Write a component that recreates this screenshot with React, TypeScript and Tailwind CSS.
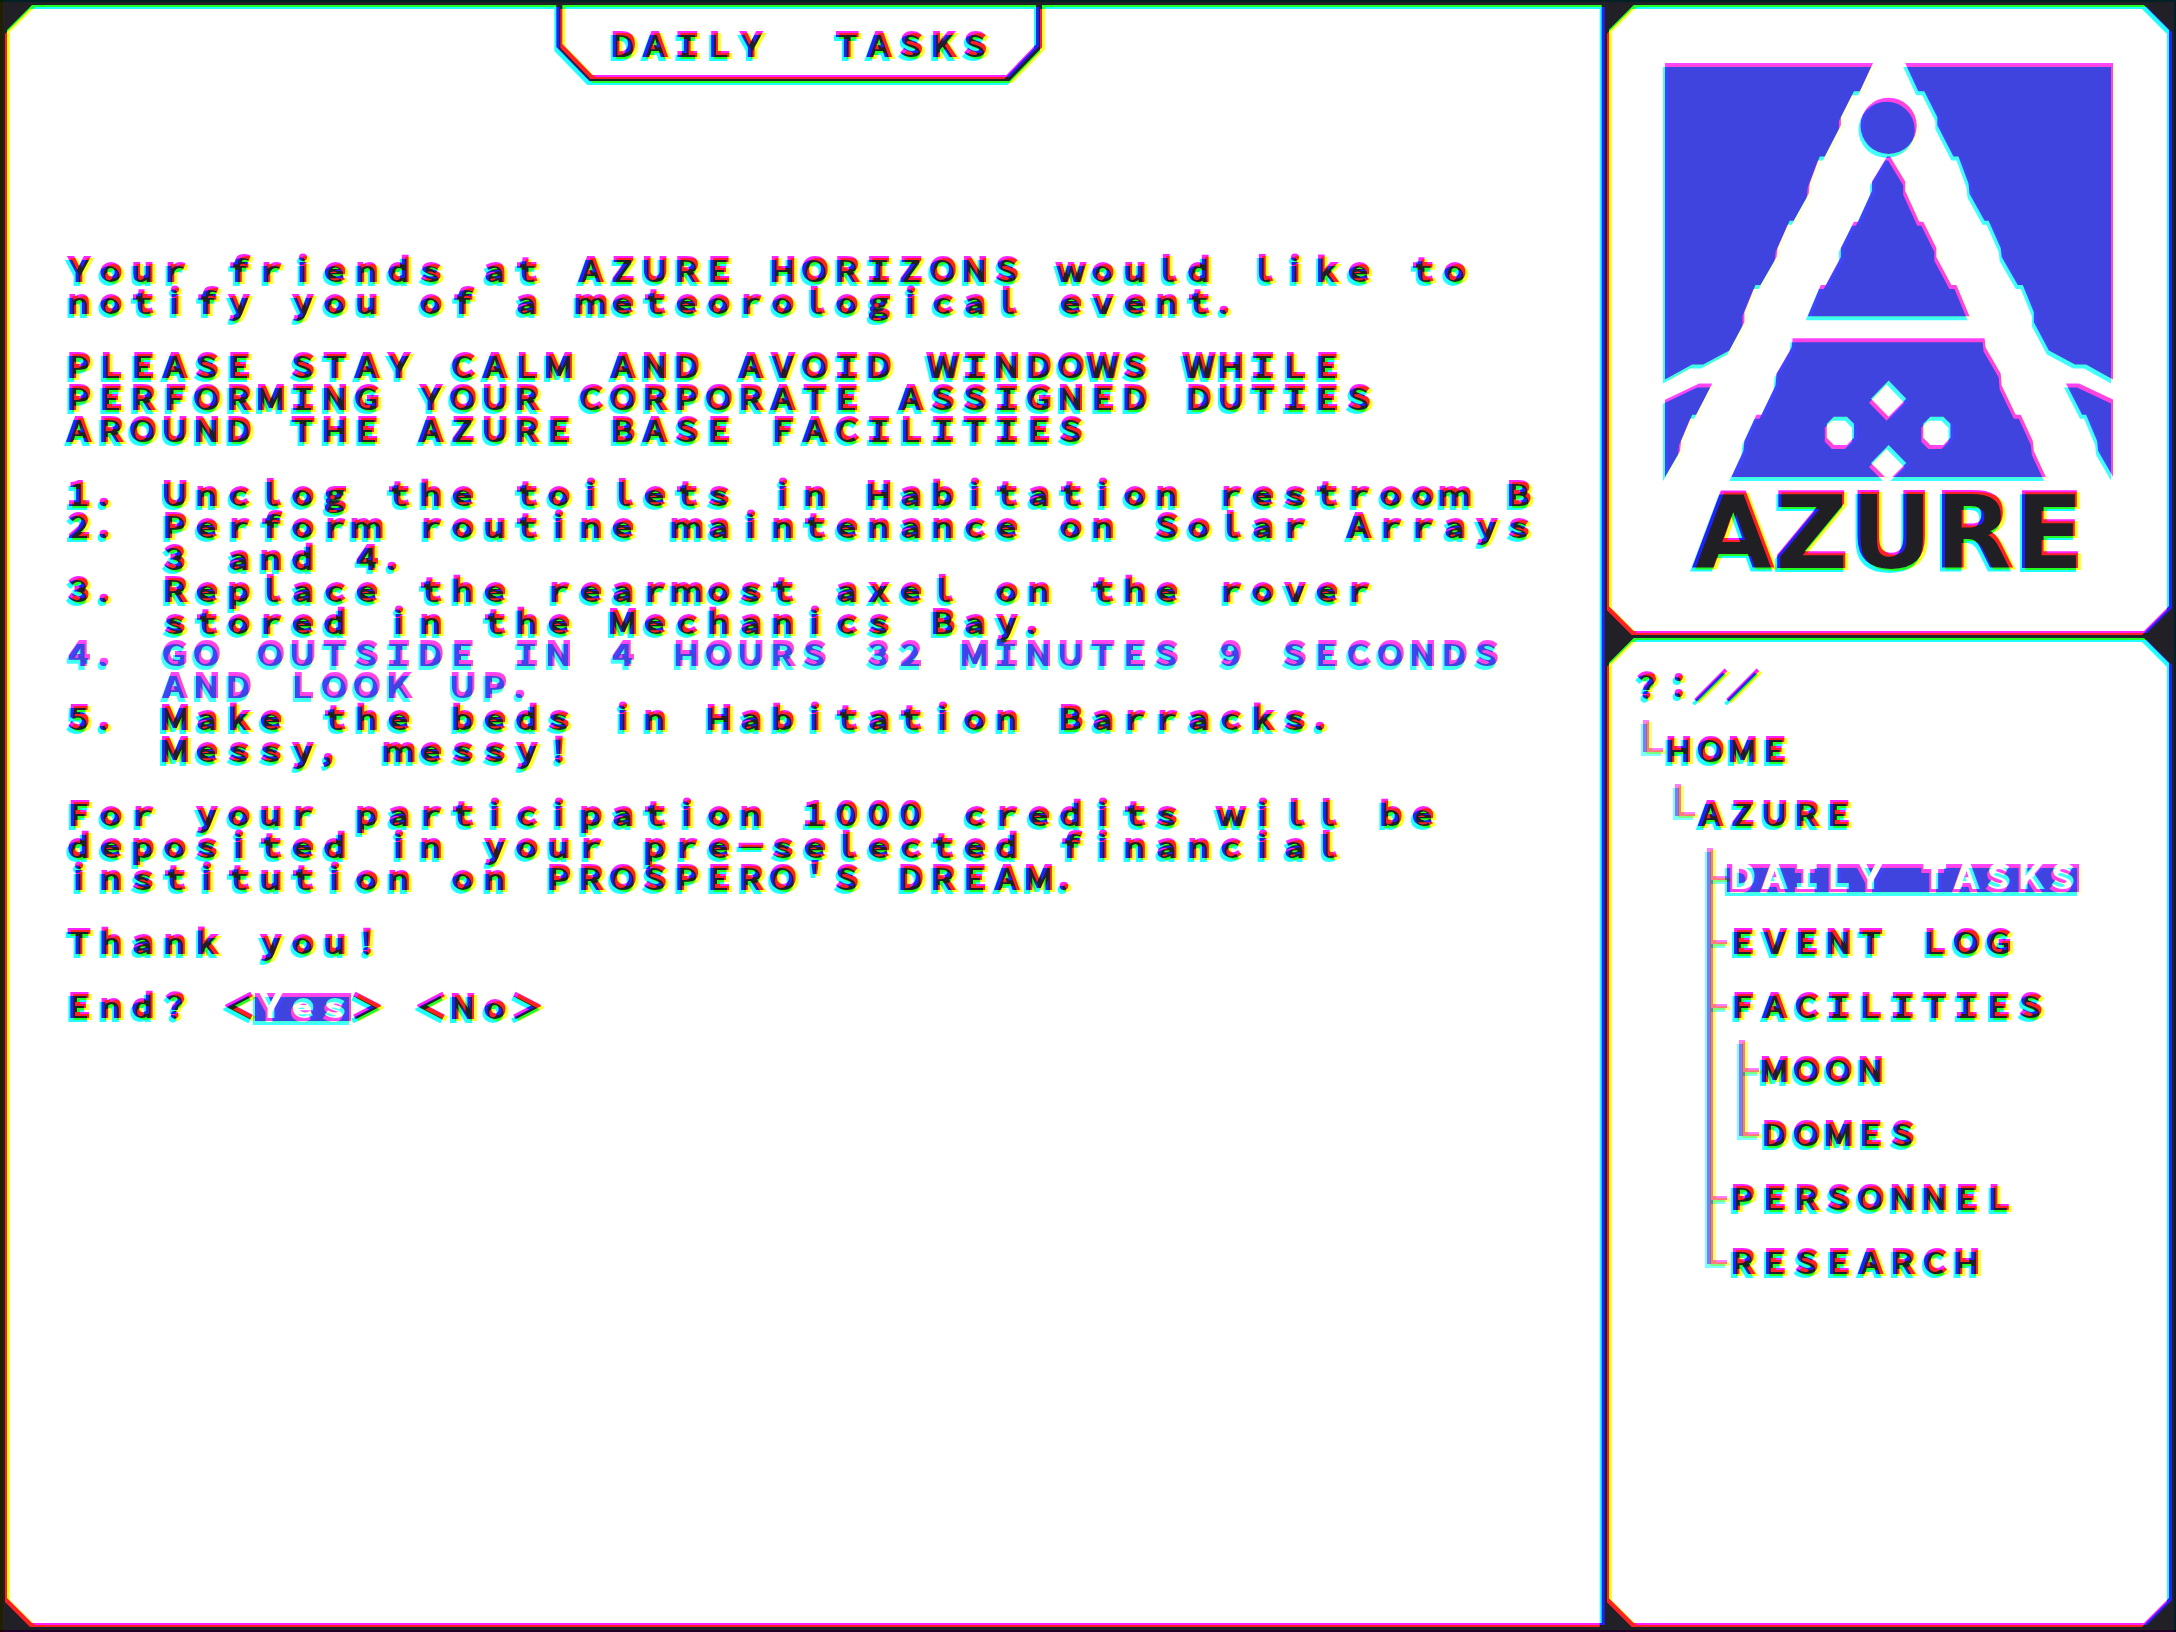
import type { ReactNode } from "react";

type Entry = { label: string; active?: boolean; children?: Entry[] };

const tree: Entry[] = [
  {
    label: "HOME",
    children: [
      {
        label: "AZURE",
        children: [
          { label: "DAILY TASKS", active: true },
          { label: "EVENT LOG" },
          { label: "FACILITIES", children: [{ label: "MOON" }, { label: "DOMES" }] },
          { label: "PERSONNEL" },
          { label: "RESEARCH" },
        ],
      },
    ],
  },
];

const tasks: { text: string; alert?: boolean }[] = [
  { text: "Unclog the toilets in Habitation restroom B" },
  { text: "Perform routine maintenance on Solar Arrays 3 and 4." },
  { text: "Replace the rearmost axel on the rover stored in the Mechanics Bay." },
  { text: "GO OUTSIDE IN 4 HOURS 32 MINUTES 9 SECONDS AND LOOK UP.", alert: true },
  { text: "Make the beds in Habitation Barracks. Messy, messy!" },
];

/* Splits the colour channels like a badly converged CRT. */
function ConvergenceFilter() {
  return (
    <svg width="0" height="0" className="absolute" aria-hidden="true">
      <filter id="convergence" x="0" y="0" width="100%" height="100%" colorInterpolationFilters="sRGB">
        <feColorMatrix in="SourceGraphic" values="1 0 0 0 0  0 0 0 0 0  0 0 0 0 0  0 0 0 1 0" />
        <feOffset dx="-2" dy="2" result="r" />
        <feColorMatrix in="SourceGraphic" values="0 0 0 0 0  0 1 0 0 0  0 0 0 0 0  0 0 0 1 0" />
        <feOffset dx="0" dy="-2" result="g" />
        <feColorMatrix in="SourceGraphic" values="0 0 0 0 0  0 0 0 0 0  0 0 1 0 0  0 0 0 1 0" />
        <feOffset dx="3" dy="0" result="b" />
        <feBlend in="r" in2="g" mode="screen" result="rg" />
        <feBlend in="rg" in2="b" mode="screen" />
      </filter>
    </svg>
  );
}

function Logo() {
  return (
    <svg viewBox="0 0 446 412" className="w-4/5" aria-hidden="true">
      <g fill="#4044de">
        <path d="M0 0H207L194 28H188L175 54V62L159 93H154L144 120 143 130 128 157H124L112 184 111 193 95 221H90L79 248V258L64 286 38 300H27L0 315Z" />
        <path d="M446 0H239L252 28H258L271 54V62L287 93H292L302 120 303 130 318 157H322L334 184 335 193 351 221H356L367 248V258L382 286 408 300H419L446 315Z" />
        <path d="M0 335 34 319H47L31 350H27L16 376 15 386 0 412Z" />
        <path d="M446 335 412 319H399L415 350H419L430 376 431 386 446 412Z" />
        <path d="M221 93 206 118V127L192 158H188L175 184V193L160 221H155L142 252H303L290 221H285L270 193V184L257 158H253L239 127V118L224 93Z" />
        <path d="M127 274H318L319 283 334 309 335 321 349 350H354L366 376 367 386 379 412H66L78 386 79 376 91 350H96L110 321 111 309 126 283Z" />
        <circle cx="222.500" cy="62.500" r="28" />
      </g>
      <g fill="#fff">
        <path d="M222.500 316 240 334 222.500 352 205 334Z" />
        <path d="M222.500 380 240 398 226 412H219L205 398Z" />
        <path d="M168 352H181L188 359V373L181 380H168L161 373V359Z" />
        <path d="M264 352H277L284 359V373L277 380H264L257 373V359Z" />
      </g>
    </svg>
  );
}

function Selected({ children }: { children: ReactNode }) {
  return <span className="inline-block bg-[#4044de] pb-2 leading-5 text-white">{children}</span>;
}

function Branch({ entries }: { entries: Entry[] }) {
  return (
    <ul>
      {entries.map((entry, i) => (
        <li key={entry.label} className="flex">
          <span className="flex w-8 flex-col pl-3" aria-hidden="true">
            <span className="h-8 border-b-4 border-l-6 border-[#7c7c7c]" />
            {i < entries.length - 1 && <span className="flex-1 border-l-6 border-[#7c7c7c]" />}
          </span>
          <div>
            <button
              type="button"
              className={
                entry.active
                  ? "flex h-16 items-center pb-1 whitespace-nowrap"
                  : "flex h-16 items-center pb-2.5 whitespace-nowrap"
              }
            >
              {entry.active ? <Selected>{entry.label}</Selected> : entry.label}
            </button>
            {entry.children && <Branch entries={entry.children} />}
          </div>
        </li>
      ))}
    </ul>
  );
}

export default function App() {
  return (
    <>
      <ConvergenceFilter />
      <div className="grid min-h-screen grid-cols-[74fr_26fr] gap-[7px] bg-[#202026] p-[7px] font-['Noto_Sans_CJK_JP',monospace] text-[32px] leading-8 font-bold text-[#202024] [filter:url(#convergence)] [font-variant-east-asian:full-width] [font-variant-ligatures:none] [-webkit-text-stroke:2px_currentColor]">
        <main className="bg-white [clip-path:polygon(25px_0,100%_0,100%_100%,25px_100%,0_calc(100%-25px),0_25px)]">
          <header className="pr-2.5">
            <div className="mx-auto h-[76px] w-[486px] bg-[#202026] px-1.5 pb-1.5 [clip-path:polygon(0_0,100%_0,100%_42px,calc(100%-33px)_100%,33px_100%,0_42px)]">
              <h1 className="flex h-full items-center justify-center bg-white pt-1 whitespace-pre [clip-path:polygon(0_0,100%_0,100%_39px,calc(100%-30px)_100%,30px_100%,0_39px)]">
                DAILY  TASKS
              </h1>
            </div>
          </header>
          <div className="flex flex-col gap-8 px-14 pt-[170px]">
            <p>Your friends at AZURE HORIZONS would like to notify you of a meteorological event.</p>
            <p>
              PLEASE STAY CALM AND AVOID WINDOWS WHILE PERFORMING YOUR CORPORATE ASSIGNED DUTIES AROUND THE AZURE BASE
              FACILITIES
            </p>
            <ol>
              {tasks.map((task, i) => (
                <li key={task.text} className={task.alert ? "flex text-[#4044de]" : "flex"}>
                  <span className="w-24 shrink-0">{i + 1}.</span>
                  <span>{task.text}</span>
                </li>
              ))}
            </ol>
            <p>
              For your participation 1000 credits will be deposited in your pre-selected financial institution on
              PROSPERO'S DREAM.
            </p>
            <p>Thank you!</p>
            <div className="flex">
              <span className="mr-8">End?</span>
              <span>&lt;</span>
              <button type="button">
                <Selected>Yes</Selected>
              </button>
              <span className="mr-8">&gt;</span>
              <span>&lt;</span>
              <button type="button">No</button>
              <span>&gt;</span>
            </div>
          </div>
        </main>
        <aside className="flex flex-col gap-[7px]">
          <section className="flex flex-col items-center bg-white pt-[58px] pb-[46px] [clip-path:polygon(25px_0,calc(100%-25px)_0,100%_25px,100%_calc(100%-25px),calc(100%-25px)_100%,25px_100%,0_calc(100%-25px),0_25px)]">
            <Logo />
            <div className="font-['DejaVu_Sans',sans-serif] text-[104px] leading-[108px] [font-variant-east-asian:normal]">
              AZURE
            </div>
          </section>
          <nav
            aria-label="Directory"
            className="flex-1 bg-white pt-[18px] pl-[22px] [clip-path:polygon(25px_0,calc(100%-25px)_0,100%_25px,100%_calc(100%-25px),calc(100%-25px)_100%,25px_100%,0_calc(100%-25px),0_25px)]"
          >
            <div className="flex h-16 items-center pb-2.5">?://</div>
            <Branch entries={tree} />
          </nav>
        </aside>
      </div>
    </>
  );
}
